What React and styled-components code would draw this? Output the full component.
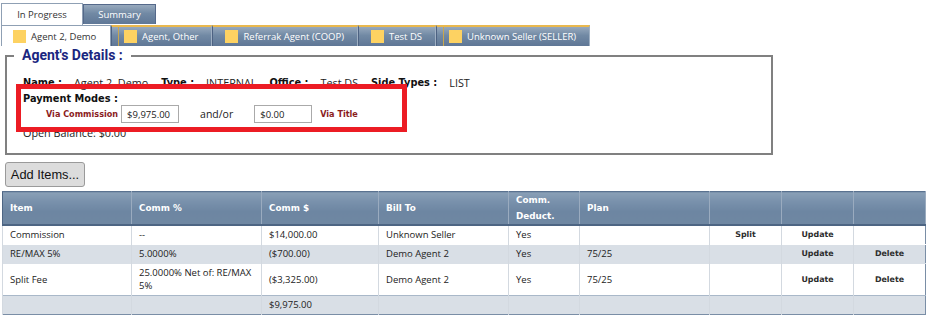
import React from "react";
import styled, { createGlobalStyle } from "styled-components";

const GlobalStyle = createGlobalStyle`
  body {
    margin: 0;
    background: #fff;
    font-family: "Open Sans", "Noto Sans", sans-serif;
    color: #222;
  }
`;

const Page = styled.div`
  padding: 3px 0 8px 1px;
  width: 936px;
  box-sizing: border-box;
`;

const TabRow = styled.div`
  display: flex;
  align-items: flex-end;
  height: ${(p) => p.height}px;
`;

const TopTab = styled.div`
  box-sizing: border-box;
  display: flex;
  align-items: center;
  justify-content: center;
  width: ${(p) => p.width}px;
  height: ${(p) => (p.active ? 22 : 20)}px;
  font-size: 9.5px;
  color: ${(p) => (p.active ? "#333" : "#fff")};
  background: ${(p) =>
    p.active ? "#fff" : "linear-gradient(#97a9bd, #7189a4 45%, #5f7796)"};
  border: 1px solid ${(p) => (p.active ? "#8fa0b4" : "#55698a")};
  border-bottom: none;
  margin-bottom: ${(p) => (p.active ? 0 : 1)}px;
`;

const AgentTab = styled.div`
  position: relative;
  box-sizing: border-box;
  display: flex;
  align-items: center;
  gap: 5px;
  height: 21px;
  padding: 0 13px 0 ${(p) => (p.first ? 11 : 12)}px;
  width: ${(p) => (p.width ? `${p.width}px` : "auto")};
  white-space: nowrap;
  font-size: 9.5px;
  color: ${(p) => (p.active ? "#333" : "#fff")};
  background: ${(p) =>
    p.active ? "#fff" : "linear-gradient(#97a9bd, #7189a4 45%, #5f7796)"};
  border-top: ${(p) => (p.active ? "1px solid #8fa0b4" : "2px solid #e9b84e")};
  border-left: 1px solid ${(p) => (p.active ? "#8fa0b4" : "#4d6282")};
  border-right: 1px solid ${(p) => (p.active ? "#8fa0b4" : "#9fb0c3")};
  &::before {
    content: "";
    display: ${(p) => (p.accent ? "block" : "none")};
    position: absolute;
    left: 6px;
    top: 0;
    bottom: 0;
    width: 1px;
    background: #c9a74e;
  }
`;

const Swatch = styled.span`
  width: 13px;
  height: 13px;
  background: #fdd262;
  flex: none;
`;

const Fieldset = styled.fieldset`
  box-sizing: border-box;
  width: 768px;
  height: 108px;
  margin: 1px 0 0 4px;
  padding: 0 0 0 7px;
  border: 2px solid #808080;
`;

const Legend = styled.legend`
  padding: 0 8px;
  font-family: Roboto, sans-serif;
  font-weight: bold;
  font-size: 14px;
  line-height: 17px;
  color: #1a2680;
`;

const Details = styled.div`
  position: relative;
  padding: 11px 0 0 9px;
`;

const InfoRow = styled.div`
  display: flex;
  align-items: center;
  height: ${(p) => p.h || 14}px;
  padding-left: ${(p) => p.indent || 0}px;
  margin-top: ${(p) => p.mt || 0}px;
`;

const Label = styled.span`
  font-family: "DejaVu Sans", Verdana, sans-serif;
  font-weight: bold;
  font-size: 9.8px;
  color: #111;
  margin-right: 12px;
`;

const Value = styled.span`
  font-size: 10.8px;
  color: #222;
  margin-right: 13px;
`;

const ModeLabel = styled.span`
  font-family: "DejaVu Sans", Verdana, sans-serif;
  font-weight: bold;
  font-size: 8.1px;
  color: #8b1c1c;
  margin: ${(p) => p.m};
`;

const Amount = styled.input`
  box-sizing: border-box;
  width: 58px;
  height: 18px;
  border: 1px solid #aaa;
  padding: 0 0 0 5px;
  font-family: "Open Sans", sans-serif;
  font-size: 9.5px;
  color: #222;
  background: #fff;
`;

const AndOr = styled.span`
  font-size: 10.5px;
  margin: 0 21px;
  color: #222;
`;

const Highlight = styled.div`
  position: absolute;
  left: 2px;
  top: 20px;
  width: 391px;
  height: 48px;
  box-sizing: border-box;
  border: 5px solid #ec1c24;
  pointer-events: none;
`;

const AddButton = styled.button`
  display: block;
  box-sizing: border-box;
  margin: 7px 0 0 4px;
  width: 80px;
  height: 25px;
  padding: 0;
  background: #dcdcdc;
  border: 1px solid #9a9a9a;
  border-radius: 3px;
  font-family: "Liberation Sans", Arial, sans-serif;
  font-size: 12.8px;
  color: #111;
`;

const Table = styled.table`
  margin: 4px 0 0 1px;
  width: 923px;
  table-layout: fixed;
  border-collapse: collapse;
  border: 1px solid #7a8ea6;
`;

const Th = styled.th`
  height: 32px;
  padding: 0 7px;
  text-align: left;
  vertical-align: middle;
  font-family: "DejaVu Sans", Verdana, sans-serif;
  font-weight: bold;
  font-size: 8.8px;
  line-height: 16px;
  color: #fff;
  background: linear-gradient(#8aa0b7, #7890ab 30%, #6d86a2 60%, #6f87a2);
  border-top: 1px solid #5a7290;
  border-bottom: 2px solid #4d6583;
  border-left: 1px solid #4e6684;
  border-right: 1px solid #9aabbf;
`;

const Tr = styled.tr`
  background: ${(p) => (p.shade ? "#d9dfe6" : "#fff")};
  border-top: 1px solid ${(p) => (p.total ? "#a9b8c9" : "transparent")};
`;

const Td = styled.td`
  padding: 2px 7px 3px;
  vertical-align: middle;
  font-size: 9.5px;
  line-height: 13px;
  color: #222;
  border-left: 1px solid #d3d9e0;
  text-align: ${(p) => (p.action ? "center" : "left")};
  ${(p) =>
    p.action &&
    `
    font-family: "DejaVu Sans", Verdana, sans-serif;
    font-weight: bold;
    font-size: 7.9px;
    color: #2d2d2d;
  `}
`;

const widths = [129, 130, 117, 130, 71, 130, 72, 72, 72];

const agents = [
  { name: "Agent 2, Demo", active: true, width: 110 },
  { name: "Agent, Other", accent: true },
  { name: "Referrak Agent (COOP)" },
  { name: "Test DS" },
  { name: "Unknown Seller (SELLER)", accent: true },
];

const rows = [
  {
    cells: ["Commission", "--", "$14,000.00", "Unknown Seller", "Yes", ""],
    actions: ["Split", "Update", ""],
  },
  {
    shade: true,
    cells: ["RE/MAX 5%", "5.0000%", "($700.00)", "Demo Agent 2", "Yes", "75/25"],
    actions: ["", "Update", "Delete"],
  },
  {
    cells: [
      "Split Fee",
      "25.0000% Net of: RE/MAX 5%",
      "($3,325.00)",
      "Demo Agent 2",
      "Yes",
      "75/25",
    ],
    actions: ["", "Update", "Delete"],
  },
];

export default function App() {
  return (
    <Page>
      <GlobalStyle />
      <TabRow height={22}>
        <TopTab active width={82}>In Progress</TopTab>
        <TopTab width={73}>Summary</TopTab>
      </TabRow>
      <TabRow height={21}>
        {agents.map((a, i) => (
          <AgentTab
            key={a.name}
            first={i === 0}
            active={a.active}
            accent={a.accent}
            width={a.width}
          >
            <Swatch />
            {a.name}
          </AgentTab>
        ))}
      </TabRow>

      <Fieldset>
        <Legend>Agent's Details :</Legend>
        <Details>
          <InfoRow>
            <Label>Name :</Label>
            <Value>Agent 2, Demo</Value>
            <Label>Type :</Label>
            <Value>INTERNAL</Value>
            <Label>Office :</Label>
            <Value>Test DS</Value>
            <Label>Side Types :</Label>
            <Value>LIST</Value>
          </InfoRow>
          <InfoRow mt={2}>
            <Label>Payment Modes :</Label>
          </InfoRow>
          <InfoRow h={18} indent={23} mt={0}>
            <ModeLabel m="0 3px 0 0">Via Commission</ModeLabel>
            <Amount defaultValue="$9,975.00" readOnly />
            <AndOr>and/or</AndOr>
            <Amount defaultValue="$0.00" readOnly />
            <ModeLabel m="0 0 0 8px">Via Title</ModeLabel>
          </InfoRow>
          <InfoRow mt={2}>
            <Value>Open Balance: $0.00</Value>
          </InfoRow>
          <Highlight />
        </Details>
      </Fieldset>

      <AddButton>Add Items...</AddButton>

      <Table>
        <colgroup>
          {widths.map((w, i) => (
            <col key={i} style={{ width: w }} />
          ))}
        </colgroup>
        <thead>
          <tr>
            <Th>Item</Th>
            <Th>Comm %</Th>
            <Th>Comm $</Th>
            <Th>Bill To</Th>
            <Th>
              Comm.
              <br />
              Deduct.
            </Th>
            <Th>Plan</Th>
            <Th />
            <Th />
            <Th />
          </tr>
        </thead>
        <tbody>
          {rows.map((r, i) => (
            <Tr key={i} shade={r.shade}>
              {r.cells.map((c, j) => (
                <Td key={j}>{c}</Td>
              ))}
              {r.actions.map((a, j) => (
                <Td key={`a${j}`} action>
                  {a}
                </Td>
              ))}
            </Tr>
          ))}
          <Tr shade total>
            <Td />
            <Td />
            <Td>$9,975.00</Td>
            <Td />
            <Td />
            <Td />
            <Td />
            <Td />
            <Td />
          </Tr>
        </tbody>
      </Table>
    </Page>
  );
}
